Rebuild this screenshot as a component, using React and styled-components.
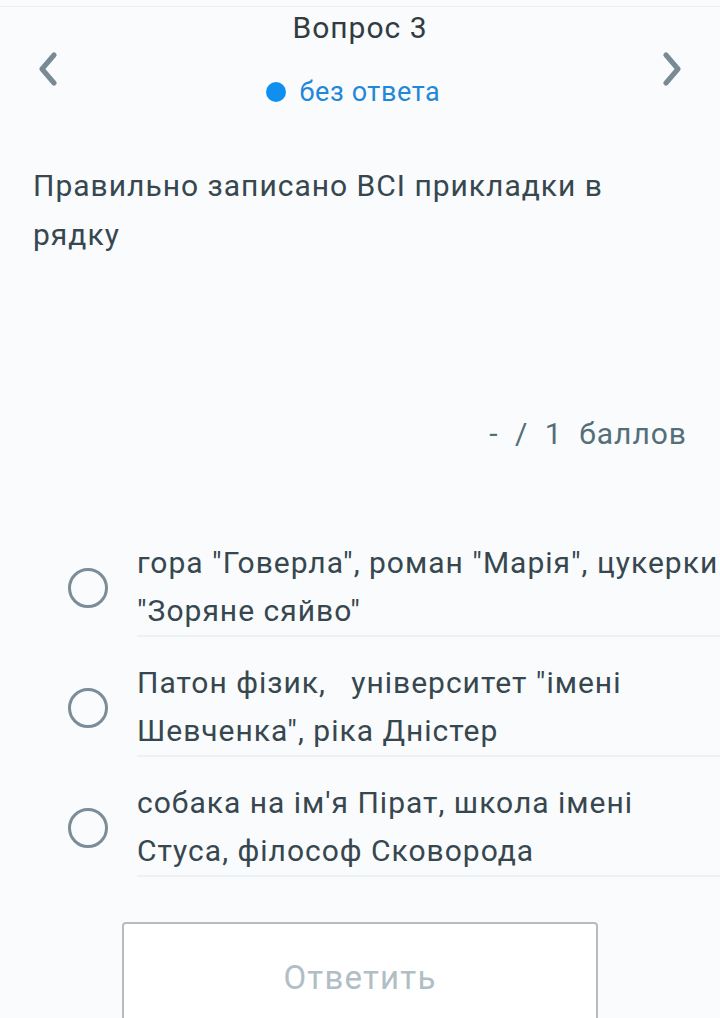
import React from "react";
import styled, { createGlobalStyle } from "styled-components";

const GlobalStyle = createGlobalStyle`
  html, body {
    margin: 0;
    padding: 0;
    background: #f9fbfc;
    font-family: Roboto, "Noto Sans", sans-serif;
  }
`;

const Page = styled.div`
  width: 720px;
  height: 1018px;
  overflow: hidden;
  border-top: 1px solid #eceff1;
  margin-top: 6px;
  box-sizing: border-box;
`;

const Header = styled.div`
  display: flex;
  align-items: center;
  justify-content: space-between;
  padding: 0 36px;
  height: 124px;
`;

const NavButton = styled.button`
  border: none;
  background: none;
  padding: 0;
  width: 24px;
  height: 40px;
  display: flex;
  align-items: center;
  justify-content: center;
  color: #788a93;
  cursor: pointer;
`;

const HeaderCenter = styled.div`
  align-self: flex-start;
  display: flex;
  flex-direction: column;
  align-items: center;
  gap: 30px;
  padding-top: 3px;
`;

const QuestionNumber = styled.div`
  font-size: 30px;
  letter-spacing: 1px;
  color: #333b40;
  line-height: 36px;
`;

const Status = styled.div`
  display: flex;
  align-items: center;
  gap: 14px;
  font-size: 27px;
  letter-spacing: 0.6px;
  color: #1f88d8;
  line-height: 32px;
  margin-left: -14px;
`;

const Dot = styled.span`
  width: 20px;
  height: 20px;
  border-radius: 50%;
  background: #0f8ff0;
`;

const QuestionText = styled.p`
  margin: 30px 0 0;
  padding: 0 33px;
  max-width: 600px;
  font-size: 30px;
  letter-spacing: 1px;
  line-height: 49px;
  color: #37474f;
`;

const Score = styled.div`
  margin-top: 155px;
  padding-right: 33px;
  text-align: right;
  font-size: 30px;
  letter-spacing: 1px;
  word-spacing: 8px;
  color: #546e7a;
  line-height: 40px;
`;

const Options = styled.div`
  margin-top: 63px;
  display: flex;
  flex-direction: column;
`;

const Option = styled.label`
  display: flex;
  align-items: center;
  padding-top: 22px;
  cursor: pointer;
`;

const RadioWrap = styled.div`
  width: 137px;
  flex-shrink: 0;
  display: flex;
  padding-left: 68px;
  box-sizing: border-box;
`;

const Radio = styled.span`
  width: 34px;
  height: 34px;
  border-radius: 50%;
  border: 3px solid #7b8d96;
  flex-shrink: 0;
`;

const OptionText = styled.div`
  flex: 1;
  font-size: 30px;
  letter-spacing: 1px;
  line-height: 48px;
  color: #37474f;
  border-bottom: 2px solid #eef1f3;
  white-space: pre-wrap;
`;

const Footer = styled.div`
  display: flex;
  justify-content: center;
  margin-top: 45px;
`;

const AnswerButton = styled.button`
  width: 476px;
  height: 110px;
  background: #ffffff;
  border: 2px solid #b6bcc0;
  border-radius: 4px;
  font-family: Roboto, "Noto Sans", sans-serif;
  font-size: 33px;
  letter-spacing: 1.2px;
  color: #b0bec5;
  padding: 0;
`;

const Chevron = ({ dir }) => (
  <svg width="22" height="34" viewBox="0 0 22 34">
    <path
      d={dir === "left" ? "M17 3 L5 17 L17 31" : "M5 3 L17 17 L5 31"}
      fill="none"
      stroke="currentColor"
      strokeWidth="5"
      strokeLinecap="round"
      strokeLinejoin="round"
    />
  </svg>
);

const options = [
  'гора "Говерла", роман "Марія", цукерки "Зоряне сяйво"',
  'Патон фізик,   університет "імені Шевченка", ріка Дністер',
  "собака на ім'я Пірат, школа імені Стуса, філософ Сковорода",
];

export default function App() {
  return (
    <>
      <GlobalStyle />
      <Page>
        <Header>
          <NavButton>
            <Chevron dir="left" />
          </NavButton>
          <HeaderCenter>
            <QuestionNumber>Вопрос 3</QuestionNumber>
            <Status>
              <Dot />
              без ответа
            </Status>
          </HeaderCenter>
          <NavButton>
            <Chevron dir="right" />
          </NavButton>
        </Header>
        <QuestionText>Правильно записано ВСІ прикладки в рядку</QuestionText>
        <Score>- / 1 баллов</Score>
        <Options>
          {options.map((text, i) => (
            <Option key={i}>
              <RadioWrap>
                <Radio />
              </RadioWrap>
              <OptionText>{text}</OptionText>
            </Option>
          ))}
        </Options>
        <Footer>
          <AnswerButton>Ответить</AnswerButton>
        </Footer>
      </Page>
    </>
  );
}
